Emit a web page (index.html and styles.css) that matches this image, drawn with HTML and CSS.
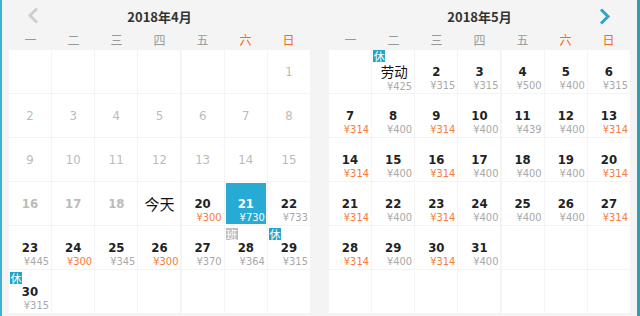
FILE: index.html
```html
<!DOCTYPE html>
<html lang="zh-CN">
<head>
<meta charset="utf-8">
<title>日历</title>
<link rel="stylesheet" href="styles.css">
</head>
<body>
<div class="page">
  <div class="edge edge-l"></div>
  <div class="cals">
    <section class="cal">
      <header class="cal-head">
        <span class="nav nav-prev"><svg width="12" height="17" viewBox="0 0 12 17"><polyline points="10,1.5 3,8.5 10,15.5" fill="none" stroke="#cfcfcf" stroke-width="3"/></svg></span>
        <h2 class="title">2018年4月</h2>
        <span class="nav-spacer"></span>
      </header>
      <div class="week"><span>一</span><span>二</span><span>三</span><span>四</span><span>五</span><span class="we">六</span><span class="we">日</span></div>
      <div class="grid">
        <div class="cell"></div><div class="cell"></div><div class="cell"></div><div class="cell"></div><div class="cell"></div><div class="cell"></div>
        <div class="cell past">1</div>
        <div class="cell past">2</div><div class="cell past">3</div><div class="cell past">4</div><div class="cell past">5</div><div class="cell past">6</div><div class="cell past">7</div><div class="cell past">8</div>
        <div class="cell past">9</div><div class="cell past">10</div><div class="cell past">11</div><div class="cell past">12</div><div class="cell past">13</div><div class="cell past">14</div><div class="cell past">15</div>
        <div class="cell past bold">16</div><div class="cell past bold">17</div><div class="cell past bold">18</div>
        <div class="cell today">今天</div>
        <div class="cell day"><b class="num">20</b><span class="price low">¥300</span></div>
        <div class="cell day sel"><b class="num">21</b><span class="price">¥730</span></div>
        <div class="cell day"><b class="num">22</b><span class="price">¥733</span></div>
        <div class="cell day"><b class="num">23</b><span class="price">¥445</span></div>
        <div class="cell day"><b class="num">24</b><span class="price low">¥300</span></div>
        <div class="cell day"><b class="num">25</b><span class="price">¥345</span></div>
        <div class="cell day"><b class="num">26</b><span class="price low">¥300</span></div>
        <div class="cell day"><b class="num">27</b><span class="price">¥370</span></div>
        <div class="cell day"><i class="tag work">班</i><b class="num">28</b><span class="price">¥364</span></div>
        <div class="cell day"><i class="tag">休</i><b class="num">29</b><span class="price">¥315</span></div>
        <div class="cell day"><i class="tag">休</i><b class="num">30</b><span class="price">¥315</span></div>
        <div class="cell"></div><div class="cell"></div><div class="cell"></div><div class="cell"></div><div class="cell"></div><div class="cell"></div>
      </div>
    </section>
    <section class="cal">
      <header class="cal-head">
        <span class="nav-spacer"></span>
        <h2 class="title">2018年5月</h2>
        <span class="nav nav-next"><svg width="12" height="17" viewBox="0 0 12 17"><polyline points="2,1.5 9,8.5 2,15.5" fill="none" stroke="#2ba6c6" stroke-width="3"/></svg></span>
      </header>
      <div class="week"><span>一</span><span>二</span><span>三</span><span>四</span><span>五</span><span class="we">六</span><span class="we">日</span></div>
      <div class="grid">
        <div class="cell"></div>
        <div class="cell day"><i class="tag top">休</i><span class="num fest">劳动</span><span class="price">¥425</span></div>
        <div class="cell day"><b class="num">2</b><span class="price">¥315</span></div>
        <div class="cell day"><b class="num">3</b><span class="price">¥315</span></div>
        <div class="cell day"><b class="num">4</b><span class="price">¥500</span></div>
        <div class="cell day"><b class="num">5</b><span class="price">¥400</span></div>
        <div class="cell day"><b class="num">6</b><span class="price">¥315</span></div>
        <div class="cell day"><b class="num">7</b><span class="price low">¥314</span></div>
        <div class="cell day"><b class="num">8</b><span class="price">¥400</span></div>
        <div class="cell day"><b class="num">9</b><span class="price low">¥314</span></div>
        <div class="cell day"><b class="num">10</b><span class="price">¥400</span></div>
        <div class="cell day"><b class="num">11</b><span class="price">¥439</span></div>
        <div class="cell day"><b class="num">12</b><span class="price">¥400</span></div>
        <div class="cell day"><b class="num">13</b><span class="price low">¥314</span></div>
        <div class="cell day"><b class="num">14</b><span class="price low">¥314</span></div>
        <div class="cell day"><b class="num">15</b><span class="price">¥400</span></div>
        <div class="cell day"><b class="num">16</b><span class="price low">¥314</span></div>
        <div class="cell day"><b class="num">17</b><span class="price">¥400</span></div>
        <div class="cell day"><b class="num">18</b><span class="price">¥400</span></div>
        <div class="cell day"><b class="num">19</b><span class="price">¥400</span></div>
        <div class="cell day"><b class="num">20</b><span class="price low">¥314</span></div>
        <div class="cell day"><b class="num">21</b><span class="price low">¥314</span></div>
        <div class="cell day"><b class="num">22</b><span class="price">¥400</span></div>
        <div class="cell day"><b class="num">23</b><span class="price low">¥314</span></div>
        <div class="cell day"><b class="num">24</b><span class="price">¥400</span></div>
        <div class="cell day"><b class="num">25</b><span class="price">¥400</span></div>
        <div class="cell day"><b class="num">26</b><span class="price">¥400</span></div>
        <div class="cell day"><b class="num">27</b><span class="price low">¥314</span></div>
        <div class="cell day"><b class="num">28</b><span class="price low">¥314</span></div>
        <div class="cell day"><b class="num">29</b><span class="price">¥400</span></div>
        <div class="cell day"><b class="num">30</b><span class="price low">¥314</span></div>
        <div class="cell day"><b class="num">31</b><span class="price">¥400</span></div>
        <div class="cell"></div><div class="cell"></div><div class="cell"></div>
        <div class="cell"></div><div class="cell"></div><div class="cell"></div><div class="cell"></div><div class="cell"></div><div class="cell"></div><div class="cell"></div>
      </div>
    </section>
  </div>
  <div class="edge edge-r"></div>
</div>
</body>
</html>
```

FILE: styles.css
```css
* { box-sizing: border-box; }
html, body { margin: 0; padding: 0; }
body {
  background: #f4f4f4;
  font-family: "DejaVu Sans Condensed", "DejaVu Sans", "Noto Sans CJK SC", sans-serif;
  color: #222;
  width: 640px;
  height: 316px;
  overflow: hidden;
}
.page {
  display: flex;
  height: 316px;
}
.edge-l { width: 2px; background: #3fb3cc; flex: none; }
.edge-r { width: 3px; background: #2f9fb3; flex: none; margin-left: auto; }
.cals {
  display: flex;
  gap: 19px;
  padding-left: 7px;
}
.cal { width: 301px; }
.cal-head {
  display: grid;
  grid-template-columns: 1fr auto 1fr;
  align-items: center;
  height: 30px;
  padding-top: 3px;
}
.title {
  margin: 0;
  font: bold 13px/27px "Noto Sans CJK SC", sans-serif;
  color: #333;
}
.nav { display: flex; height: 17px; }
.nav-prev { justify-self: start; margin-left: 18px; margin-top: -2px; }
.nav-next { justify-self: end; margin-right: 19px; }
.week {
  display: grid;
  grid-template-columns: repeat(7, 1fr);
  height: 20px;
  font: 12px/20px "Noto Sans CJK SC", sans-serif;
  color: #999;
  text-align: center;
}
.week .we { color: #f26b1d; }
.grid {
  display: grid;
  grid-template-columns: repeat(7, 42px);
  grid-auto-rows: 43px;
  column-gap: 1.17px;
  row-gap: 1px;
}
.cell {
  position: relative;
  background: #fff;
}
.past {
  display: flex;
  align-items: center;
  justify-content: center;
  color: #bbb;
  font-size: 13px;
}
.past.bold { font-weight: bold; }
.today {
  display: flex;
  align-items: center;
  justify-content: center;
  font: 15px "Noto Sans CJK SC", sans-serif;
  color: #111;
}
.day {
  display: flex;
  flex-direction: column;
  padding-top: 14px;
}
.num {
  display: block;
  text-align: center;
  font-size: 13px;
  line-height: 15px;
  font-weight: bold;
  color: #222;
}
.num.fest {
  font: 13.5px/15px "Noto Sans CJK SC", sans-serif;
  color: #111;
  padding-left: 2px;
  margin-bottom: 1px;
}
.price {
  align-self: flex-end;
  padding-right: 2px;
  margin-top: 1px;
  font-size: 11px;
  line-height: 12px;
  color: #a9a9a9;
}
.price.low { color: #f57b3a; }
.sel {
  background: #27aad3;
  box-shadow: inset 0 0 0 1px #fff;
}
.sel .num, .sel .price { color: #fff; }
.tag {
  position: absolute;
  left: 1px;
  top: 2px;
  width: 12px;
  height: 12px;
  background: #22a5c8;
  color: #fff;
  font: normal 11px/12px "Noto Sans CJK SC", sans-serif;
  text-align: center;
}
.tag.top { top: 0; }
.tag.work { background: #bdbdbd; }
```
